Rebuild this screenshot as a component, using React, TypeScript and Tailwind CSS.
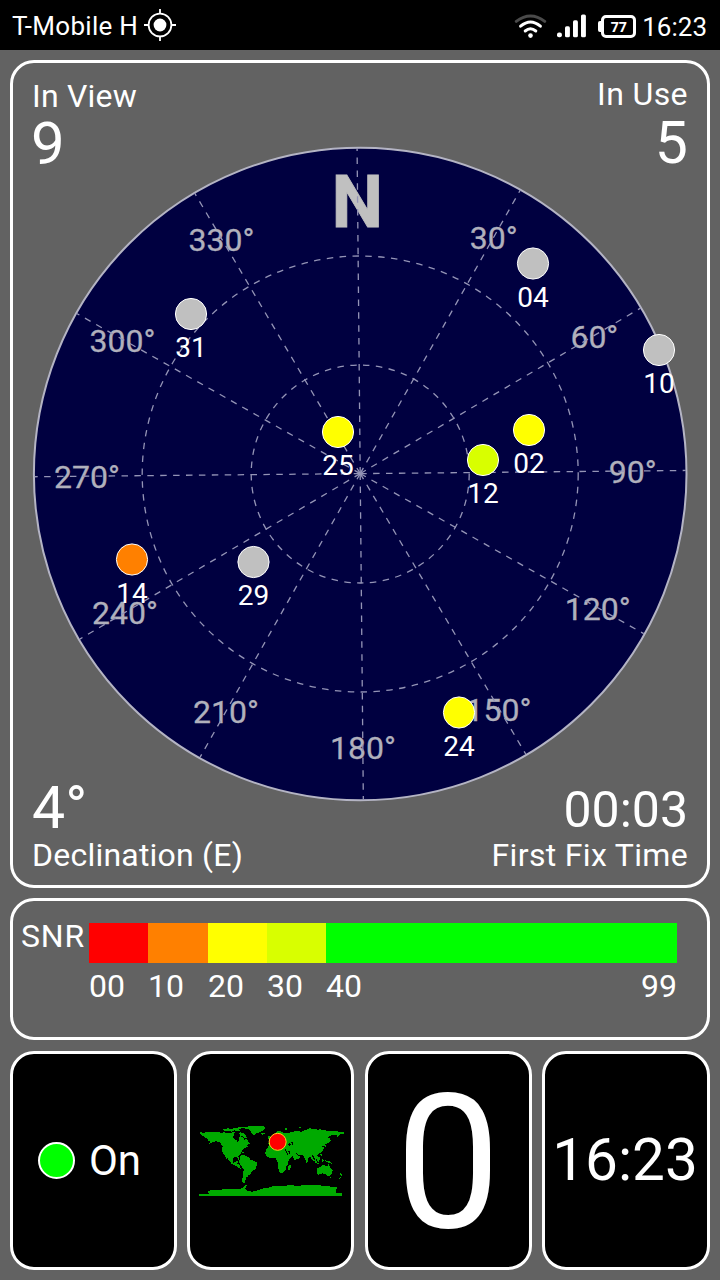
type Satellite = { id: string; x: number; y: number; color: string };
type Label = { text: string; x: number; y: number };

const satellites: Satellite[] = [
  { id: "31", x: 191, y: 314, color: "#c0c0c0" },
  { id: "04", x: 533, y: 263.5, color: "#c0c0c0" },
  { id: "10", x: 659, y: 350, color: "#c0c0c0" },
  { id: "25", x: 338, y: 432, color: "#ffff00" },
  { id: "02", x: 529, y: 430, color: "#ffff00" },
  { id: "12", x: 483, y: 460, color: "#d8ff00" },
  { id: "14", x: 132, y: 559.5, color: "#ff8000" },
  { id: "29", x: 253.5, y: 562, color: "#c0c0c0" },
  { id: "24", x: 459, y: 712.5, color: "#ffff00" },
];

const bearings: Label[] = [
  { text: "30°", x: 469.7, y: 248.7 },
  { text: "60°", x: 570.4, y: 347.7 },
  { text: "90°", x: 608.8, y: 482.7 },
  { text: "120°", x: 564.8, y: 619.7 },
  { text: "150°", x: 465.6, y: 720.5 },
  { text: "180°", x: 330, y: 759 },
  { text: "210°", x: 193, y: 723 },
  { text: "240°", x: 92, y: 624.3 },
  { text: "270°", x: 54, y: 488 },
  { text: "300°", x: 89.5, y: 352.3 },
  { text: "330°", x: 188.6, y: 251.2 },
];

const spokes = Array.from({ length: 12 }, (_, i) => i * 30 - 0.55);

function StatusBar() {
  return (
    <header className="flex h-[50px] items-center justify-between bg-black pl-3 pr-[13px] text-[26px] leading-[26px]">
      <div className="flex items-center gap-[6px]">
        <span className="w-[126px] whitespace-nowrap pt-[2px] tracking-[0.28px]">T-Mobile H</span>
        <svg width="32" height="32" viewBox="0 0 32 32" fill="none" stroke="#fff" strokeWidth="1.8">
          <circle cx="16" cy="16" r="11.4" />
          <circle cx="16" cy="16" r="6.4" fill="#fff" stroke="none" />
          <path d="M16 0v5M16 27v5M0 16h5M27 16h5" />
        </svg>
      </div>
      <div className="flex items-center">
        <svg className="mt-[2px]" width="33" height="25" viewBox="0 0 33 25" fill="none" strokeWidth="3" strokeLinecap="round">
          <path d="M2.3 7.4Q16.5 -3.4 30.7 7.4" stroke="#4a4a4a" />
          <path d="M6.6 12.2Q16.5 3.8 26.4 12.2" stroke="#fff" />
          <path d="M11.2 17Q16.5 12.6 21.8 17" stroke="#fff" />
          <circle cx="16.5" cy="21.6" r="2.3" fill="#fff" />
        </svg>
        <svg className="ml-[10px] mt-[2px]" width="30" height="24" viewBox="0 0 30 24" fill="#fff">
          <rect x="0" y="18.6" width="4.9" height="4.7" rx="2" />
          <rect x="8" y="12.3" width="4.9" height="11" rx="1.6" />
          <rect x="16" y="6.3" width="4.9" height="17" rx="1.6" />
          <rect x="24" y="0.5" width="4.9" height="22.8" rx="1.6" />
        </svg>
        <div className="ml-[11px] mt-[3px] flex items-center">
          <span className="-mr-px h-[11px] w-[4px] rounded-l-[2px] bg-white" />
          <span className="flex h-[23px] w-[35px] items-center justify-center rounded-[5px] border-[3px] border-white font-['Open_Sans',sans-serif] text-[14px] font-bold leading-none">
            77
          </span>
        </div>
        <span className="ml-[6px] pt-[3px]">16:23</span>
      </div>
    </header>
  );
}

function SkyPlot() {
  return (
    <svg className="col-start-1 row-start-1" width="694" height="822" viewBox="13 63 694 822" fontFamily="Roboto, sans-serif">
      <circle cx="360.2" cy="474" r="326.3" fill="#000040" stroke="#b4b4c4" strokeWidth="2" />
      <g fontSize="32" fill="#b0b0bc" stroke="#b0b0bc" strokeWidth="0.3">
        {bearings.map((b) => (
          <text key={b.text} x={b.x} y={b.y}>
            {b.text}
          </text>
        ))}
      </g>
      <text x="357.3" y="227.3" fontSize="73" fontWeight="700" textAnchor="middle" fill="#c0c0c0" stroke="#c0c0c0" strokeWidth="0.8">
        N
      </text>
      <g fill="none" stroke="#9494b6" strokeWidth="1.3" strokeDasharray="6.5 6.4">
        <circle cx="360.2" cy="474" r="109" />
        <circle cx="360.2" cy="474" r="218" />
        {spokes.map((a) => (
          <path key={a} d="M360.2 473.6V148" transform={`rotate(${a} 360.2 473.6)`} />
        ))}
      </g>
      {satellites.map((s) => (
        <g key={s.id}>
          <circle cx={s.x} cy={s.y} r="15.6" fill={s.color} stroke="#fff" strokeWidth="1" />
          <text x={s.x} y={s.y + 43} fontSize="28" textAnchor="middle" fill="#fff">
            {s.id}
          </text>
        </g>
      ))}
    </svg>
  );
}

function WorldMap() {
  return (
    <svg className="shrink-0" width="146" height="78" viewBox="22 36 438 234" shapeRendering="crispEdges">
      <g fill="#00aa00">
        <path d="M24 68l10-1 3 4 8-6 20 1 14 0 12 2 10-1 12 3 10-1 6-4 8 4-2 8-8 4 4 6 8 4 2 8 4-8-2-10 6-2 8 4 4 6 8-2 4 8 6 6-12 4 4 5-10 4-6 7-4 8-6 6-2 6 4 9-3 1-4-9-10 0-5 8 3 8 6-1 3-5 6 0-4 9 7 3 2 8 5 2-4 2-9-5-8-6-10-4-6-9-7-9-1 1 5 9-4-3-6-12-6-7-3-10 2-13-8-10-10-4-10 1-12 6 4-6-8-2-1-6-8-4z" />
        <path d="M98 58l14-3 10 3 6-4 12 0 4-3 14-1-6 5-8 3 6 4-10 1-10-2-8 4-12-3-10 1zM148 67l9 2 8 8 4 7-9-1-4-5-7-1-3-6zM150 54l14-4 40-2 16 1 4 5-6 7-10 6-9 2-9 8-5-4-5-10-7-6-14-2z" />
        <path d="M211 69l9-1 3 4-8 2zM131 121l12 2 8 4-8-1zM152 126l9 1-3 3z" />
        <path d="M146 140l8-5 12 2 10 6 4 7 10 2 11 7-3 9-5 11-8 3-5 10-6 3-3 6-6 2 0 6-3 3 1 8-6-1-3-8 3-14 2-18-5-9-7-9-2-8 4-6z" />
        <path d="M232 101l4-8 8-3-3-5 7-3 4-12 8-7 13 2 6 6 9-2 12-2 18-4 14 2 12-5 12-5 20 2 8 4 18 0 16 3 20 0 20 2 9 3-8 3-10 1-4 5-6 5-1-8-9 0-14 3-2 6 6 1-2 8-7 7-7 1 4 7-2 5-5-6-7 2 7 3-3 9-5 7-10 4-2 4 6 7-1 6-4 2-5-6 2 11 5 6-3 1-7-9-2-13-6-5-6 2-7 9 0 8-4 4-5-11-3-10-9-3-8-1-8-6 6 8 8 3-4 6-13 6-8-15-6-7 0-6-11 0-8-5 0 5-5-4-8-4-7 1-6 6z" />
        <path d="M228 117l9-13 18-3 3 5 10 3 5-2 12 3 6 13 6 9 10-1-3 8-10 11-2 13-5 5-2 10-6 9-8 3-5-4-4-15 1-10-5-8-1-7-9-3-11 1-9-6-5-8z" />
        <path d="M293 169l7-5 1 5-4 11-4-1zM344 137l4 4-2 4-3-3zM232 81l4-5 5 9-8 3zM413 91l6-5 1 7-7 7-7 1 3-4zM357 137l5 1 9 11 5 7-6-2-8-8zM373 157l18 2-7 2-10-1zM379 145l9-5 1 7-5 8-6-4zM388 131l4-1 3 9-4-2zM394 147l4-1 1 8-4 1zM404 151l12 2 8 8-8-2-9-3z" />
        <path d="M379 175l9-3 7-7 8-1 2 6 5-1 3-7 6 10 7 8-1 10-7 8-8 0-5-6-9-2-12 4-5-2zM416 200l5 0-2 4zM449 190l7 6-4 3-3-4zM442 207l8-6 1 2-8 5z" />
        <path d="M24 258v-6l30-1-3-6 9-5 28-1 24-2 30 1 14-4 10-9 3 1-6 11 5 5 17 3 15-4 14-5 16-2 14-5 30-2 30-1 18 2 12-2 22-2 22 2 24 1 20 3 20 3-8 7 3 8 18 1v10z" />
        <path d="M282 56l5-2 3 4-7 2zM325 51l8 2-5 3zM384 58l8 0 0 2-8 0z" />
      </g>
      <g fill="#000">
        <path d="M129 70l9-2 9 6-2 8-4 4-7-5-5 2-3-4 5-3zM105 65l9 1-2 2-8-1zM292 104l3-5 6 4-4 5zM302 95l4 1 1 11-4-2zM282 117l3 1 8 16-3 0z" />
      </g>
      <circle cx="261" cy="95.5" r="25.5" fill="#ff0000" stroke="#ffd020" strokeWidth="3" shapeRendering="auto" />
    </svg>
  );
}

const tile = "flex items-center justify-center overflow-hidden rounded-[24px] border-[3px] border-white bg-black";

export default function App() {
  return (
    <div className="flex h-[1280px] w-[720px] flex-col overflow-hidden bg-[#626262] font-['Roboto',sans-serif] text-white">
      <StatusBar />
      <main className="flex flex-1 flex-col px-[10px] pt-[10px]">
        <section className="grid h-[828px] grid-cols-[694px] grid-rows-[822px] rounded-[24px] border-[3px] border-white">
          <SkyPlot />
          <div className="col-start-1 row-start-1 flex flex-col justify-between px-[19px] pb-[14px] pt-[15px]">
            <div className="flex justify-between">
              <div className="flex flex-col gap-[2px] pt-[2px]">
                <span className="text-[32px] leading-[32px] tracking-[0.2px]">In View</span>
                <span className="text-[60px] leading-[60px] [margin-left:-1px]">9</span>
              </div>
              <div className="flex flex-col items-end gap-[3px]">
                <span className="text-[32px] leading-[32px] tracking-[0.4px]">In Use</span>
                <span className="text-[59px] leading-[59px]">5</span>
              </div>
            </div>
            <div className="flex items-end justify-between">
              <div className="flex flex-col gap-[2px]">
                <span className="text-[59px] leading-[59px]">4°</span>
                <span className="text-[32px] leading-[32px] tracking-[0.22px]">Declination (E)</span>
              </div>
              <div className="flex flex-col items-end gap-[4px]">
                <span className="text-[50px] leading-[50px]">00:03</span>
                <span className="text-[32px] leading-[32px] tracking-[0.33px]">First Fix Time</span>
              </div>
            </div>
          </div>
        </section>

        <section className="mt-[10px] flex h-[142px] rounded-[24px] border-[3px] border-white pl-2 pt-[22px] text-[32px] leading-[32px]">
          <span className="-mt-[3px] w-[68px] shrink-0 tracking-[0.8px]">SNR</span>
          <div className="w-[588px]">
            <div className="flex h-[40px]">
              <div className="w-[59px] bg-[#ff0000]" />
              <div className="w-[60px] bg-[#ff8000]" />
              <div className="w-[59px] bg-[#ffff00]" />
              <div className="w-[59px] bg-[#d8ff00]" />
              <div className="flex-1 bg-[#00ff00]" />
            </div>
            <div className="mt-[7px] flex">
              <span className="w-[59px]">00</span>
              <span className="w-[60px]">10</span>
              <span className="w-[59px]">20</span>
              <span className="w-[59px]">30</span>
              <span className="flex-1">40</span>
              <span>99</span>
            </div>
          </div>
        </section>

        <section className="mt-[11px] grid h-[219px] grid-cols-[167px_167px_167px_168px] gap-x-[10.33px]">
          <div className={tile}>
            <div className="flex items-center gap-[14px] pr-[8px]">
              <span className="size-[37px] rounded-full border-2 border-white bg-[#00ff00]" />
              <span className="text-[42px] leading-[42px]">On</span>
            </div>
          </div>
          <div className={tile}>
            <WorldMap />
          </div>
          <div className={tile}>
            <span className="pt-[6px] text-[187px] leading-[187px]">0</span>
          </div>
          <div className={tile}>
            <span className="pr-[2px] text-[58.5px] leading-[59px]">16:23</span>
          </div>
        </section>
      </main>
    </div>
  );
}
